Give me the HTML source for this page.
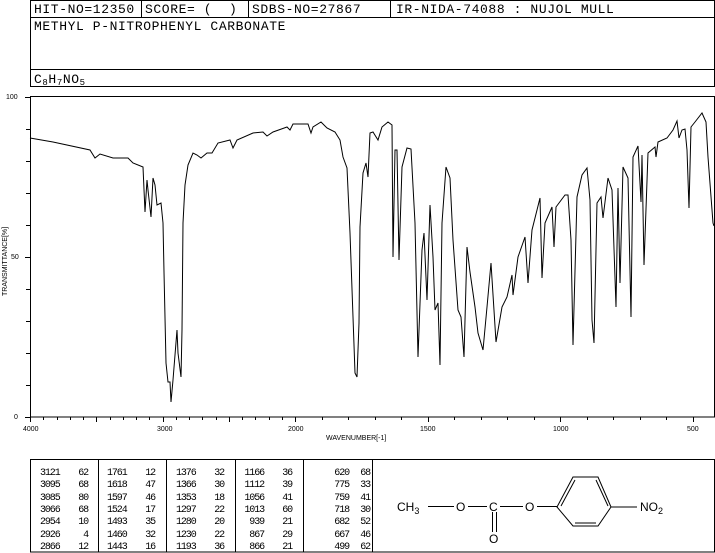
<!DOCTYPE html>
<html><head><meta charset="utf-8"><style>
html,body{margin:0;padding:0;background:#fff;width:715px;height:553px;overflow:hidden}
svg{display:block}
.h{font-family:"Liberation Mono",monospace;font-size:13px;letter-spacing:0.6px;white-space:pre}
.t{font-family:"Liberation Mono",monospace;font-size:10px;letter-spacing:-1.1px}
.s{font-family:"Liberation Sans",sans-serif;font-size:7px}
.st{font-family:"Liberation Sans",sans-serif;font-size:12px}
</style></head><body>
<svg width="715" height="553" viewBox="0 0 715 553" xmlns="http://www.w3.org/2000/svg">
<g fill="none" stroke="#000" stroke-width="1">
<rect x="30.5" y="0.5" width="684" height="86"/>
<line x1="30" y1="17.5" x2="715" y2="17.5"/>
<line x1="30" y1="69.5" x2="715" y2="69.5"/>
<line x1="141.5" y1="0" x2="141.5" y2="17"/>
<line x1="248.5" y1="0" x2="248.5" y2="17"/>
<line x1="390.5" y1="0" x2="390.5" y2="17"/>
<rect x="30.5" y="96.5" width="684" height="320.5"/>
<rect x="30.5" y="459.5" width="684" height="92.5"/>
<line x1="98.5" y1="460" x2="98.5" y2="552"/>
<line x1="166.5" y1="460" x2="166.5" y2="552"/>
<line x1="235.5" y1="460" x2="235.5" y2="552"/>
<line x1="303.5" y1="460" x2="303.5" y2="552"/>
<line x1="372.5" y1="460" x2="372.5" y2="552"/>
</g>
<g class="h">
<text x="34" y="13">HIT-NO=12350</text>
<text x="145" y="13" xml:space="preserve">SCORE= (  )</text>
<text x="252" y="13">SDBS-NO=27867</text>
<text x="396" y="13" xml:space="preserve">IR-NIDA-74088 : NUJOL MULL</text>
<text x="34" y="30">METHYL P-NITROPHENYL CARBONATE</text>
<text x="34" y="83">C<tspan font-size="9" dy="2">8</tspan><tspan dy="-2">H</tspan><tspan font-size="9" dy="2">7</tspan><tspan dy="-2">NO</tspan><tspan font-size="9" dy="2">5</tspan></text>
</g>
<g class="s">
<text x="6" y="99">100</text><text x="11" y="259">50</text><text x="14" y="419">0</text>
<text x="23" y="431">4000</text><text x="157" y="431">3000</text><text x="288" y="431">2000</text><text x="420" y="431">1500</text><text x="553" y="431">1000</text><text x="687" y="431">500</text>
<text x="326" y="440">WAVENUMBER[-1]</text>
<text transform="translate(7,296) rotate(-90)">TRANSMITTANCE[%]</text>
</g>
<g stroke="#000" stroke-width="1">
<path d="M25 97.5H30M26 129.5H30M26 161.5H30M26 193.5H30M26 225.5H30M25 257.5H30M26 289.5H30M26 321.5H30M26 353.5H30M26 385.5H30M25 417.5H30"/>
<path d="M30.5 417v5M43.5 417v3M57.5 417v3M70.5 417v3M83.5 417v3M96.5 417v5M110.5 417v3M123.5 417v3M136.5 417v3M149.5 417v3M163.5 417v5M176.5 417v3M189.5 417v3M202.5 417v3M216.5 417v3M229.5 417v5M242.5 417v3M255.5 417v3M269.5 417v3M282.5 417v3M295.5 417v5M322.5 417v3M348.5 417v3M375.5 417v3M401.5 417v3M428.5 417v5M454.5 417v3M481.5 417v3M507.5 417v3M534.5 417v3M560.5 417v5M587.5 417v3M613.5 417v3M640.5 417v3M666.5 417v3M693.5 417v5"/>
</g>
<polyline fill="none" stroke="#000" stroke-width="1" points="30,138 53,142 90,150 95,158 100,154 113,158 128,158 133,163 143,167 145,212 147,180 148,190 151,217 153,178 155,185 157,205 161,203 163,223 164,272 166,363 168,382 170,382 171,402 173,380 177,330 178,353 181,377 182,330 183,223 185,185 188,165 193,153 197,155 201,158 207,153 212,153 218,143 230,140 233,148 237,140 253,133 263,132 267,136 273,132 287,127 290,130 293,124 308,124 311,133 313,127 321,122 327,128 335,132 340,140 343,157 347,168 350,233 353,317 355,373 357,377 359,323 360,227 363,173 366,163 368,177 370,133 373,132 378,140 382,127 388,122 392,125 393,257 395,150 397,150 399,260 402,167 407,148 411,149 415,223 418,357 422,250 424,233 427,300 430,205 433,257 435,310 438,303 440,365 442,223 446,167 450,178 453,240 458,310 461,317 464,357 467,247 470,272 475,307 478,333 483,350 487,307 491,263 496,342 502,307 507,297 512,275 513,295 518,257 525,237 528,283 532,230 537,210 540,198 542,278 545,223 552,207 554,247 556,207 565,195 568,195 571,240 573,345 577,197 582,175 587,168 590,200 592,320 594,343 597,203 601,197 603,218 608,178 612,190 616,307 618,188 620,283 623,167 628,178 631,317 633,157 638,146 641,202 642,155 644,265 648,153 655,147 656,157 658,142 667,138 673,130 677,121 679,138 682,130 685,129 687,150 689,208 691,127 695,122 702,113 706,122 708,157 713,223 714,226"/>
<g class="t">
<text x="40" y="475">3121</text><text x="40" y="487">3095</text><text x="40" y="500">3085</text><text x="40" y="512">3066</text><text x="40" y="524">2954</text><text x="40" y="537">2926</text><text x="40" y="549">2866</text>
<g text-anchor="end"><text x="88" y="475">62</text><text x="88" y="487">68</text><text x="88" y="500">80</text><text x="88" y="512">68</text><text x="88" y="524">10</text><text x="88" y="537">4</text><text x="88" y="549">12</text></g>
<text x="107" y="475">1761</text><text x="107" y="487">1618</text><text x="107" y="500">1597</text><text x="107" y="512">1524</text><text x="107" y="524">1493</text><text x="107" y="537">1460</text><text x="107" y="549">1443</text>
<g text-anchor="end"><text x="155" y="475">12</text><text x="155" y="487">47</text><text x="155" y="500">46</text><text x="155" y="512">17</text><text x="155" y="524">35</text><text x="155" y="537">32</text><text x="155" y="549">16</text></g>
<text x="176" y="475">1376</text><text x="176" y="487">1366</text><text x="176" y="500">1353</text><text x="176" y="512">1297</text><text x="176" y="524">1280</text><text x="176" y="537">1230</text><text x="176" y="549">1193</text>
<g text-anchor="end"><text x="224" y="475">32</text><text x="224" y="487">30</text><text x="224" y="500">18</text><text x="224" y="512">22</text><text x="224" y="524">20</text><text x="224" y="537">22</text><text x="224" y="549">36</text></g>
<g text-anchor="end"><text x="264" y="475">1166</text><text x="264" y="487">1112</text><text x="264" y="500">1056</text><text x="264" y="512">1013</text><text x="264" y="524">939</text><text x="264" y="537">867</text><text x="264" y="549">866</text></g>
<g text-anchor="end"><text x="292" y="475">36</text><text x="292" y="487">39</text><text x="292" y="500">41</text><text x="292" y="512">60</text><text x="292" y="524">21</text><text x="292" y="537">29</text><text x="292" y="549">21</text></g>
<g text-anchor="end"><text x="349" y="475">620</text><text x="349" y="487">775</text><text x="349" y="500">759</text><text x="349" y="512">718</text><text x="349" y="524">682</text><text x="349" y="537">667</text><text x="349" y="549">499</text></g>
<g text-anchor="end"><text x="370" y="475">68</text><text x="370" y="487">33</text><text x="370" y="500">41</text><text x="370" y="512">30</text><text x="370" y="524">52</text><text x="370" y="537">46</text><text x="370" y="549">62</text></g>
</g>
<g class="st">
<text x="397" y="511">CH<tspan font-size="9" dy="3">3</tspan></text>
<text x="456" y="511">O</text>
<text x="489" y="511">C</text>
<text x="525" y="511">O</text>
<text x="489" y="543">O</text>
<text x="640" y="511">NO<tspan font-size="9" dy="3">2</tspan></text>
</g>
<g fill="none" stroke="#000" stroke-width="1">
<path d="M428 506.5H454M468 506.5H487M500 506.5H523M537 506.5H557"/>
<path d="M492.5 512V532M496.5 512V532"/>
<path d="M557 507L573 477H598L611 507L598 526H573Z"/>
<path d="M561 506L575 480M596 480L608 506M575 523H596"/>
<path d="M611 507H637"/>
</g>
</svg>
</body></html>
